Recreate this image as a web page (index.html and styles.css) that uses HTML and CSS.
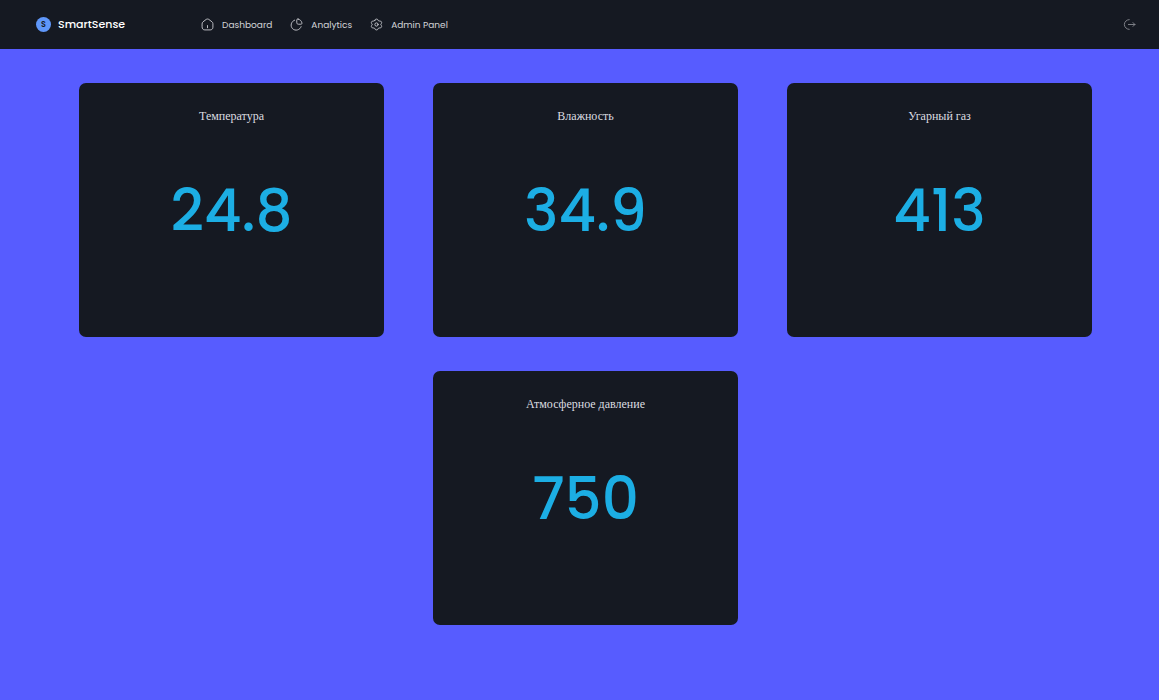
FILE: index.html
```html
<!DOCTYPE html>
<html lang="ru">
<head>
<meta charset="utf-8">
<meta name="viewport" content="width=device-width, initial-scale=1">
<title>SmartSense</title>
<link rel="stylesheet" href="styles.css">
</head>
<body>
<header class="header">
  <a class="brand" href="#"><span class="brand-mark" aria-hidden="true">S</span><span class="brand-name">SmartSense</span></a>
  <nav class="nav">
    <a class="nav-link" href="#">
      <svg class="icon" viewBox="0 0 24 24" aria-hidden="true"><path d="M2 10.500c0-1.400.6-2.500 1.700-3.400l5.600-4.300c1.600-1.200 3.800-1.200 5.400 0l5.600 4.300c1.100.9 1.700 2 1.700 3.400V17c0 2.900-2 5-5 5H7c-3 0-5-2.100-5-5zM12 18v-4"/></svg>
      Dashboard
    </a>
    <a class="nav-link" href="#">
      <svg class="icon" viewBox="0 0 24 24" aria-hidden="true"><path d="M15 2c3.600.8 6.200 3.400 7 7 .3 1.800-.5 2.500-2 2.500h-4.500c-1.800 0-3-1.200-3-3V4c0-1.500.8-2.300 2.500-2zM8.500 4a9.500 9.500 0 1 0 12 12"/></svg>
      Analytics
    </a>
    <a class="nav-link" href="#">
      <svg class="icon" viewBox="0 0 24 24" aria-hidden="true"><circle cx="12" cy="12" r="3"/><path d="M9 4.200C9.500 2.600 10.500 2 12 2s2.500.6 3 2.200c.6 1.300 1.200 1.600 2.600 1.400 1.700-.3 2.700.2 3.400 1.500.8 1.300.7 2.400-.4 3.600-.9 1-.9 1.600 0 2.600 1.100 1.200 1.200 2.300.4 3.600-.7 1.300-1.700 1.800-3.400 1.500-1.400-.2-2 .1-2.600 1.400-.5 1.600-1.500 2.200-3 2.200s-2.500-.6-3-2.200c-.6-1.300-1.200-1.600-2.600-1.400-1.700.3-2.700-.2-3.400-1.500-.8-1.300-.7-2.400.4-3.600.9-1 .9-1.600 0-2.600C2.300 9.500 2.200 8.400 3 7.100c.7-1.300 1.700-1.800 3.400-1.500 1.400.2 2-.1 2.600-1.400z"/></svg>
      Admin Panel
    </a>
  </nav>
  <button class="logout" type="button" aria-label="Logout">
    <svg class="icon icon-muted" viewBox="0 0 24 24" aria-hidden="true"><path d="M11.500 21a9 9 0 0 1 0-18M10 12h12M18.500 8.500 22 12l-3.500 3.500"/></svg>
  </button>
</header>
<main class="cards">
  <section class="card"><h2 class="card-title">Температура</h2><p class="card-value">24.8</p></section>
  <section class="card"><h2 class="card-title">Влажность</h2><p class="card-value">34.9</p></section>
  <section class="card"><h2 class="card-title">Угарный газ</h2><p class="card-value">413</p></section>
  <section class="card"><h2 class="card-title">Атмосферное давление</h2><p class="card-value">750</p></section>
</main>
</body>
</html>
```

FILE: styles.css
```css
* {
  box-sizing: border-box;
}

body {
  margin: 0;
  min-height: 100vh;
  background: #575cff;
  font-family: Poppins, Inter, sans-serif;
}

.header {
  display: flex;
  align-items: center;
  min-height: 49px;
  padding: 0 23px 0 36px;
  background: #151922;
}

.brand {
  display: flex;
  align-items: center;
  gap: 7px;
  color: #fff;
  text-decoration: none;
}

.brand-mark {
  display: grid;
  place-items: center;
  width: 15px;
  height: 15px;
  border-radius: 50%;
  background: #5f97fa;
  color: #151922;
  font-size: 8px;
  font-weight: 600;
}

.brand-name {
  font-size: 11px;
  font-weight: 500;
}

.nav {
  display: flex;
  gap: 18px;
  margin-left: 76px;
}

.nav-link {
  display: flex;
  align-items: center;
  gap: 8px;
  color: #d2d3d7;
  font-size: 9px;
  line-height: 14px;
  text-decoration: none;
}

.icon {
  display: block;
  width: 13px;
  height: 13px;
  fill: none;
  stroke: #c8cacf;
  stroke-width: 1.7;
  stroke-linecap: round;
  stroke-linejoin: round;
}

.icon-muted {
  stroke: #85878f;
}

.logout {
  margin-left: auto;
  padding: 0;
  border: 0;
  background: none;
  cursor: pointer;
}

.cards {
  display: flex;
  flex-wrap: wrap;
  justify-content: center;
  gap: 34px 49px;
  padding: 34px 67px 34px 79px;
}

.card {
  flex: 0 1 calc((100% - 98px) / 3);
  min-width: 240px;
  min-height: 254px;
  padding: 24px;
  border-radius: 7px;
  background: #151922;
  text-align: center;
}

.card-title {
  margin: 0;
  color: #dcdde0;
  font-family: "Liberation Serif", serif;
  font-size: 12px;
  font-weight: 400;
  line-height: 18px;
}

.card-value {
  margin: 50px 0 0;
  color: #1caee4;
  font-family: Poppins, Roboto, sans-serif;
  font-size: 58px;
  font-weight: 500;
  line-height: 72px;
}
```
